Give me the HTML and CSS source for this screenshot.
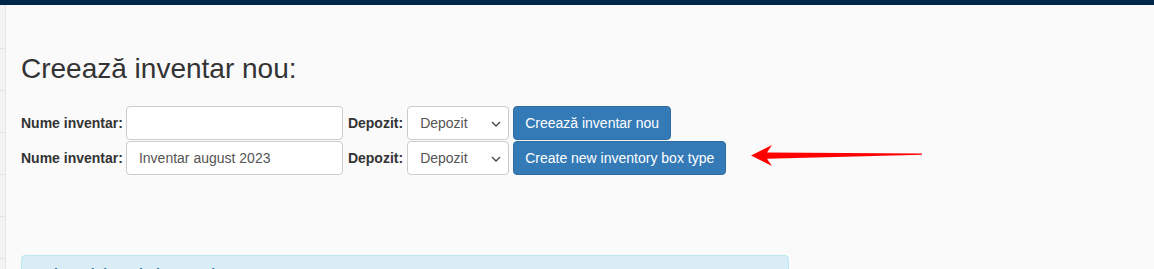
FILE: index.html
```html
<!DOCTYPE html>
<html lang="ro">
<head>
<meta charset="utf-8">
<title>Creează inventar nou</title>
<link rel="stylesheet" href="styles.css">
</head>
<body>
<div class="topbar"></div>
<div class="layout">
  <aside class="sidebar">
    <div class="side-item"></div>
    <div class="side-item"></div>
    <div class="side-item"></div>
    <div class="side-item"></div>
    <div class="side-item"></div>
    <div class="side-item"></div>
    <div class="side-item"></div>
  </aside>
  <main class="main">
    <h3 class="title">Creează inventar nou:</h3>
    <form class="form-rows">
      <div class="row">
        <label class="lbl lbl-name">Nume inventar:</label>
        <input class="ctrl input" type="text" value="">
        <label class="lbl">Depozit:</label>
        <div class="ctrl select"><span>Depozit</span><svg class="chev" viewBox="0 0 10 6" width="10" height="6"><path d="M1 1 L5 5 L9 1" fill="none" stroke="#444" stroke-width="1.3"/></svg></div>
        <button class="btn" type="button">Creează inventar nou</button>
      </div>
      <div class="row">
        <label class="lbl lbl-name">Nume inventar:</label>
        <input class="ctrl input" type="text" value="Inventar august 2023">
        <label class="lbl">Depozit:</label>
        <div class="ctrl select"><span>Depozit</span><svg class="chev" viewBox="0 0 10 6" width="10" height="6"><path d="M1 1 L5 5 L9 1" fill="none" stroke="#444" stroke-width="1.3"/></svg></div>
        <button class="btn" type="button">Create new inventory box type</button>
      </div>
    </form>
    <div class="alert"><span class="alert-text">Selectați depozitul pentru inventar</span></div>
    <svg class="arrow" width="180" height="30" viewBox="745 140 180 30">
      <polygon points="751,155.5 772,145 767,152.5 922,153.6 922,154.8 767,158.8 772,166" fill="#ff0000"/>
    </svg>
  </main>
</div>
</body>
</html>
```
FILE: styles.css
```css
* { box-sizing: border-box; }
html, body { margin: 0; padding: 0; }
body {
  background: #fafafa;
  font-family: "Liberation Sans", Arial, Helvetica, sans-serif;
  font-size: 14px;
  color: #333;
  height: 269px;
  overflow: hidden;
}
.topbar {
  height: 5px;
  background: #00264c;
}
.layout {
  display: flex;
  height: 264px;
}
.sidebar {
  width: 6px;
  background: #f3f3f3;
  border-right: 1px solid #e6e6e6;
  display: flex;
  flex-direction: column;
  padding-top: 2px;
}
.side-item {
  height: 42px;
  border-bottom: 1px solid #e3e3e3;
  flex: none;
}
.main {
  position: relative;
  flex: 1;
  padding: 0 15px;
}
.title {
  margin: 44px 0 0;
  font-size: 28px;
  font-weight: 400;
  line-height: 40px;
  color: #333;
}
.form-rows {
  margin-top: 17px;
  display: flex;
  flex-direction: column;
  gap: 1px;
}
.row {
  display: flex;
  align-items: center;
  height: 34px;
}
.lbl {
  font-weight: 700;
  font-size: 14px;
  color: #333;
  margin-right: 4px;
}
.lbl-name { margin-right: 3px; }
.ctrl {
  height: 34px;
  border: 1px solid #ccc;
  border-radius: 4px;
  background: #fff;
  font-family: "Liberation Sans", Arial, sans-serif;
  font-size: 14px;
  color: #555;
  padding: 6px 12px;
}
.input {
  width: 217px;
  margin-right: 5px;
  outline: none;
}
.select {
  width: 102px;
  margin-right: 4px;
  display: flex;
  align-items: center;
  justify-content: space-between;
  padding-right: 7px;
}
.chev { display: block; margin-top: 1px; }
.btn {
  height: 34px;
  background: #337ab7;
  border: 1px solid #2e6da4;
  border-radius: 4px;
  color: #fff;
  font-family: "Liberation Sans", Arial, sans-serif;
  font-size: 14px;
  padding: 6px 11px;
  line-height: 20px;
}
.alert {
  margin-top: 80px;
  width: 768px;
  height: 60px;
  background: #d9edf7;
  border: 1px solid #bce8f1;
  border-radius: 4px;
  padding: 10px 15px;
  color: #31708f;
  font-weight: 700;
}
.arrow {
  position: absolute;
  left: 739px;
  top: 135px;
}
```
